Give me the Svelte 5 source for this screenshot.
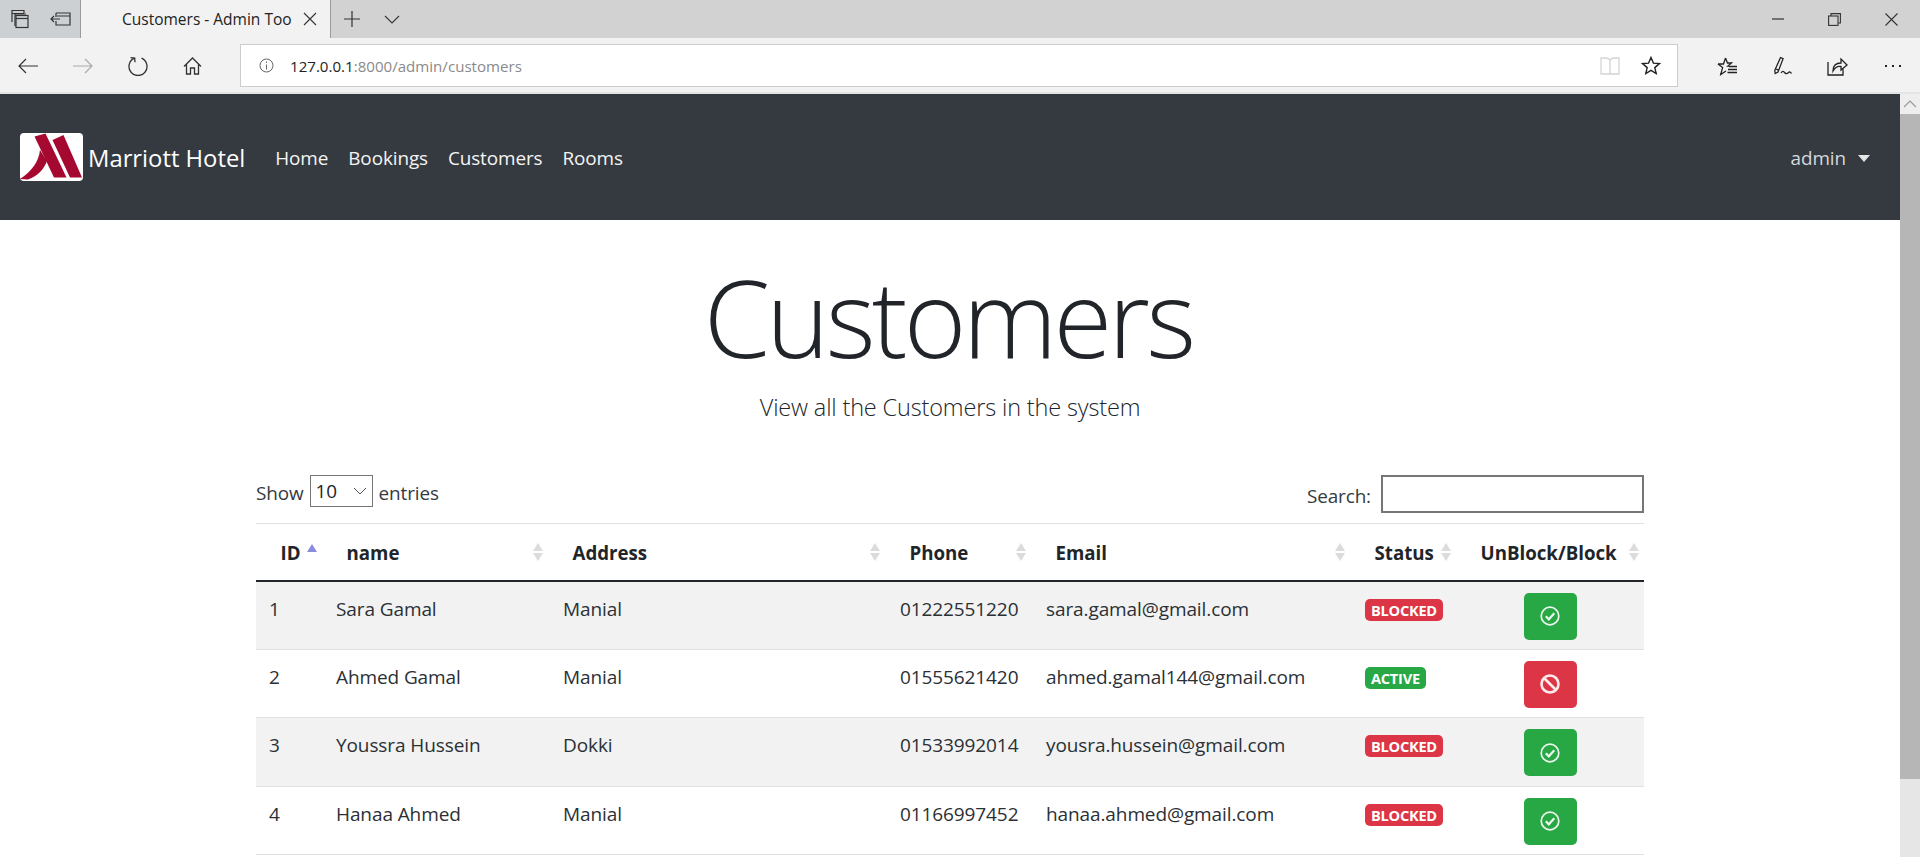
<script>
  const customers = [
    { id: 1, name: 'Sara Gamal', address: 'Manial', phone: '01222551220', email: 'sara.gamal@gmail.com', active: false },
    { id: 2, name: 'Ahmed Gamal', address: 'Manial', phone: '01555621420', email: 'ahmed.gamal144@gmail.com', active: true },
    { id: 3, name: 'Youssra Hussein', address: 'Dokki', phone: '01533992014', email: 'yousra.hussein@gmail.com', active: false },
    { id: 4, name: 'Hanaa Ahmed', address: 'Manial', phone: '01166997452', email: 'hanaa.ahmed@gmail.com', active: false }
  ];
  const headers = [
    { label: 'ID', sorted: true },
    { label: 'name' },
    { label: 'Address' },
    { label: 'Phone' },
    { label: 'Email' },
    { label: 'Status' },
    { label: 'UnBlock/Block' }
  ];
  const links = ['Home', 'Bookings', 'Customers', 'Rooms'];
</script>

<div class="window">
  <header class="tabbar">
    <div class="tab-tools">
      <span class="tbtn w40"><svg width="20" height="20" viewBox="0 0 20 20" fill="none" stroke="#333" stroke-width="1.2"><path d="M2 13V1.5h12V4M2 4.5h12"/><path d="M5 17V5h11v0"/><rect x="6" y="6.5" width="12" height="12"/><path d="M6 9.5h12"/></svg></span>
      <span class="tbtn w40"><svg width="21" height="14" viewBox="0 0 21 14" fill="none" stroke="#333" stroke-width="1.2"><path d="M6 1h14v12H6V9M6 5V1M7 4h13"/><path d="M10 7H1M4 4L1 7l3 3"/></svg></span>
    </div>
    <div class="tab">
      <span class="tab-title">Customers - Admin Too</span>
      <svg class="tab-x" width="14" height="14" viewBox="0 0 14 14" stroke="#333" stroke-width="1.1"><path d="M1 1l12 12M13 1L1 13"/></svg>
    </div>
    <span class="tbtn w41"><svg width="16" height="16" viewBox="0 0 16 16" stroke="#333" stroke-width="1.2"><path d="M8 0v16M0 8h16"/></svg></span>
    <span class="tbtn w40"><svg width="16" height="9" viewBox="0 0 16 9" fill="none" stroke="#333" stroke-width="1.1"><path d="M1 1l7 7 7-7"/></svg></span>
    <span class="spacer"></span>
    <span class="tbtn w57"><svg width="12" height="2" viewBox="0 0 12 2" stroke="#333" stroke-width="1.2"><path d="M0 1h12"/></svg></span>
    <span class="tbtn w57"><svg width="13" height="13" viewBox="0 0 13 13" fill="none" stroke="#333" stroke-width="1.1"><path d="M3 3V.6h9.4V10H10"/><rect x=".6" y="3" width="9.4" height="9.4"/></svg></span>
    <span class="tbtn w57"><svg width="13" height="13" viewBox="0 0 13 13" stroke="#333" stroke-width="1.1"><path d="M.5.5l12 12M12.5.5l-12 12"/></svg></span>
  </header>

  <div class="toolbar">
    <span class="tbtn w55"><svg width="20" height="16" viewBox="0 0 20 16" fill="none" stroke="#333" stroke-width="1.2"><path d="M20 8H1M8 1L1 8l7 7"/></svg></span>
    <span class="tbtn w55"><svg width="20" height="16" viewBox="0 0 20 16" fill="none" stroke="#aaa" stroke-width="1.2"><path d="M0 8h19M12 1l7 7-7 7"/></svg></span>
    <span class="tbtn w55"><svg width="20" height="20" viewBox="0 0 20 20" fill="none" stroke="#333" stroke-width="1.3"><path d="M6.5 2.2a9 9 0 1 0 7 0"/><path d="M2.5 1.6l4.2.5.3 4.2"/></svg></span>
    <span class="tbtn w55"><svg width="19" height="18" viewBox="0 0 19 18" fill="none" stroke="#333" stroke-width="1.3"><path d="M1 9.5L9.5 1 18 9.5M3.5 7.5V17h4v-6h4v6h4V7.5"/></svg></span>
    <div class="address">
      <svg class="info" width="15" height="15" viewBox="0 0 15 15" fill="none" stroke="#666"><circle cx="7.5" cy="7.5" r="6.5"/><path d="M7.5 6.5v5M7.5 3.5v1.4"/></svg>
      <span class="url"><span class="host">127.0.0.1</span>:8000/admin/customers</span>
      <span class="spacer"></span>
      <svg width="20" height="19" viewBox="0 0 20 19" fill="none" stroke="#d4d4d4" stroke-width="1.3"><path d="M1 2h4c2 0 4 .5 5 2 1-1.500 3-2 5-2h4v16H1z"/><path d="M10 4v14"/></svg>
      <svg class="star" width="20" height="19" viewBox="0 0 20 19" fill="none" stroke="#222" stroke-width="1.4"><path d="M10 1.500l2.400 5.600 6 .5-4.600 4 1.400 5.900L10 14.400l-5.200 3.100 1.400-5.900-4.600-4 6-.5z"/></svg>
    </div>
    <span class="tbtn w55 first"><svg width="21" height="19" viewBox="0 0 21 19" fill="none" stroke="#222" stroke-width="1.3"><path d="M8.500 1l2 5h4l-3.600 3 1.400 0M1 7h5.500L8.500 1M1 7l4.600 3.600L3.700 17.500 9 14"/><path d="M12 9.500h8M11 12.500h9M10.500 15.500h9.500"/></svg></span>
    <span class="tbtn w55"><svg width="19" height="20" viewBox="0 0 19 20" fill="none" stroke="#222" stroke-width="1.3"><path d="M7.500 1.500l2.600 1.200L5 16l-2.800 1.500-.4-3.200zM3 13l3 1.400"/><path d="M8 17c2-3 3-1 4 0s2 1 3.500-.5 2.500.5 3 1"/></svg></span>
    <span class="tbtn w55"><svg width="21" height="19" viewBox="0 0 21 19" fill="none" stroke="#222" stroke-width="1.3"><path d="M1 5v13h15v-6"/><path d="M6 14c0-5 3-8 8-8V2l6 6-6 5V9.500c-3-.5-6 1-8 4.500z"/></svg></span>
    <span class="tbtn w55"><span class="dots"><i></i><i></i><i></i></span></span>
  </div>

  <div class="viewport">
    <div class="page">
      <nav class="navbar">
        <a class="brand" href="#top">
          <svg class="logo" width="63" height="48" viewBox="0 0 63 48" aria-label="Marriott logo">
            <rect width="63" height="48" rx="4" fill="#fff"/>
            <path fill="#a6092f" d="M14.500 3.500L25.500.5l21 44H34zM32.500 7l11-5L62 44.500H50z"/>
            <path fill="#a6092f" d="M20 17c-1 11-8 21-20 29l8 .5C18 43 24 36 27 28z"/>
          </svg>
          <span class="brand-name">Marriott Hotel</span>
        </a>
        <ul class="links">
          {#each links as l}<li><a href="#top">{l}</a></li>{/each}
        </ul>
        <a class="user" href="#top">admin<span class="caret"></span></a>
      </nav>

      <main class="container">
        <section class="hero">
          <h1>Customers</h1>
          <p>View all the Customers in the system</p>
        </section>

        <div class="controls">
          <label class="show">Show
            <span class="select">10<svg width="14" height="8" viewBox="0 0 14 8" fill="none" stroke="#555"><path d="M1 1l6 6 6-6"/></svg></span>
            entries</label>
          <label class="search">Search:<span class="input"></span></label>
        </div>

        <table>
          <colgroup>
            <col class="c1" /><col class="c2" /><col class="c3" /><col class="c4" /><col class="c5" /><col class="c6" /><col class="c7" />
          </colgroup>
          <thead>
            <tr>
              {#each headers as h}
                <th>{h.label}<span class="sort" class:sorted={h.sorted}></span></th>
              {/each}
            </tr>
          </thead>
          <tbody>
            {#each customers as c, i}
              <tr class:odd={i % 2 === 0}>
                <td>{c.id}</td>
                <td>{c.name}</td>
                <td>{c.address}</td>
                <td>{c.phone}</td>
                <td>{c.email}</td>
                <td><span class="badge" class:green={c.active}>{c.active ? 'ACTIVE' : 'BLOCKED'}</span></td>
                <td class="action">
                  <span class="btn" class:green={!c.active}>
                    {#if c.active}
                      <svg width="20" height="20" viewBox="0 0 20 20" fill="none" stroke="#fbe9eb" stroke-width="2.6"><circle cx="10" cy="10" r="8.500"/><path d="M4 4l12 12"/></svg>
                    {:else}
                      <svg width="20" height="20" viewBox="0 0 20 20" fill="none" stroke="#eaf6ec" stroke-width="1.7"><circle cx="10" cy="10" r="8.800"/><path stroke-width="2.2" d="M5.800 10.300l3 3 5.500-6"/></svg>
                    {/if}
                  </span>
                </td>
              </tr>
            {/each}
          </tbody>
        </table>
      </main>
    </div>
    <aside class="scrollbar">
      <span class="sb-up"><svg width="14" height="8" viewBox="0 0 14 8" fill="none" stroke="#999" stroke-width="1.2"><path d="M1 7l6-6 6 6"/></svg></span>
      <span class="sb-thumb"></span>
      <span class="sb-track"></span>
    </aside>
  </div>
</div>

<style>
  :global(body) { margin: 0; background: #fff; }
  .window {
    width: 1920px; height: 857px; overflow: hidden;
    display: flex; flex-direction: column;
    font-family: "Open Sans", "Noto Sans", sans-serif;
    color: #212529;
  }
  .spacer { flex: 1; }
  .tbtn { display: flex; align-items: center; justify-content: center; flex: none; }
  .w40 { width: 40px; } .w41 { width: 41px; } .w55 { width: 55px; } .w57 { width: 57px; }

  .tabbar { height: 38px; flex: none; display: flex; background: #d2d2d2; }
  .tab-tools { display: flex; width: 80px; background: #cdd0d2; }
  .tab {
    width: 251px; box-sizing: border-box; background: #f2f2f2;
    border-left: 1px solid #9a9a9a; border-right: 1px solid #9a9a9a;
    display: flex; align-items: center; padding-left: 41px;
  }
  .tab-title { font-size: 15.500px; color: #222; width: 172px; white-space: nowrap; }
  .tab-x { margin-left: 9px; flex: none; }

  .toolbar {
    height: 56px; flex: none; box-sizing: border-box; display: flex; align-items: flex-start;
    background: #f2f2f2; border-bottom: 2px solid #e4e4e6;
  }
  .toolbar > .tbtn { height: 56px; }
  .address {
    margin: 6px 0 0 20px; width: 1438px; height: 43px; box-sizing: border-box;
    background: #fff; border: 1px solid #ccc; display: flex; align-items: center;
    padding: 0 16px 0 18px;
  }
  .url { margin-left: 16px; font-size: 15.100px; color: #8a8a8a; }
  .host { color: #222; }
  .star { margin-left: 21px; }
  .first { margin-left: 22px; }
  .dots { display: flex; gap: 5px; }
  .dots i { width: 2px; height: 2px; background: #222; display: block; }

  .viewport { flex: 1; min-height: 0; display: flex; }
  .page { flex: 1; min-width: 0; }
  .scrollbar { width: 20px; flex: none; display: flex; flex-direction: column; background: #e6e6e6; }
  .sb-up { height: 20px; background: #eeeeee; display: flex; align-items: center; justify-content: center; }
  .sb-thumb { height: 665px; background: #b6b6b6; }
  .sb-track { flex: 1; }

  .navbar {
    height: 126px; background: #343a40; display: flex; align-items: center;
    padding: 0 30px 0 20px; box-sizing: border-box;
  }
  .navbar a { text-decoration: none; }
  .brand { display: flex; align-items: center; color: #fff; font-size: 23.800px; font-weight: 400; }
  .brand-name { margin-top: 2px; }
  .logo { margin-right: 5px; }
  .links { list-style: none; display: flex; margin: 2px 0 0 20px; padding: 0; }
  .links a { display: block; padding: 0 10px; color: #f4f4f4; font-size: 18.900px; letter-spacing: -0.1px; }
  .user { margin: 2px 0 0 auto; display: flex; align-items: center; color: #d5d8dc; font-size: 18.900px; letter-spacing: -0.1px; }
  .caret { margin-left: 12px; border-top: 7px solid #e4e6e8; border-left: 6px solid transparent; border-right: 6px solid transparent; }

  .container { width: 1388px; margin: 0 0 0 256px; }
  .hero { height: 255px; box-sizing: border-box; padding-top: 33px; text-align: center; }
  h1 { margin: 0; padding-right: 4px; font-size: 107px; line-height: 128px; font-weight: 300; letter-spacing: -3.800px; color: #212529; }
  .hero p { margin: 8px 0 0; font-size: 23.500px; line-height: 36px; font-weight: 300; letter-spacing: -0.15px; }

  .controls { height: 48px; display: flex; justify-content: space-between; font-size: 18.900px; letter-spacing: -0.1px; color: #343a40; }
  .show { display: flex; align-items: flex-start; line-height: 37px; }
  .select {
    width: 63px; height: 32px; margin: 0 6px; box-sizing: border-box; border: 1px solid #767676; line-height: 30px;
    display: flex; align-items: center; justify-content: space-between; padding: 0 5px 0 5px; color: #212529;
  }
  .search { display: flex; align-items: flex-start; line-height: 43px; }
  .input { width: 263px; height: 38px; margin-left: 10px; box-sizing: border-box; border: 2px solid #767676; display: block; background: #fff; }

  table { width: 1388px; table-layout: fixed; border-collapse: collapse; font-size: 19px; letter-spacing: -0.1px; }
  .c1 { width: 66px; } .c2 { width: 226px; } .c3 { width: 337px; } .c4 { width: 146px; }
  .c5 { width: 319px; } .c6 { width: 106px; } .c7 { width: 188px; }
  th {
    position: relative; height: 57px; padding: 2px 0 0 24.500px; text-align: left; box-sizing: border-box;
    border-top: 1px solid #dee2e6; border-bottom: 2px solid #212529; font-weight: 700; font-size: 18.700px; letter-spacing: 0; white-space: nowrap; overflow: visible;
  }
  .sort { position: absolute; right: 5px; top: 19px; width: 10px; height: 18px; }
  .sort::before, .sort::after {
    content: ''; position: absolute; left: 0; border-left: 5px solid transparent; border-right: 5px solid transparent;
  }
  .sort::before { top: 0; border-bottom: 8px solid #dcdcdc; }
  .sort::after { bottom: 0; border-top: 8px solid #dcdcdc; }
  .sort.sorted { top: 20px; }
  .sort.sorted::before { border-bottom-color: #8b8bdd; }
  .sort.sorted::after { display: none; }
  td { padding: 12px 15px 15px; height: 68.500px; box-sizing: border-box; vertical-align: top; line-height: 30px; border-bottom: 1px solid #dee2e6; white-space: nowrap; color: #2b3035; }
  td:first-child { padding-left: 13px; }
  td:nth-child(2) { padding-left: 14px; }
  .odd td { background: #f2f2f2; }
  .badge {
    display: block; width: fit-content; height: 22px; margin-top: 5px; padding: 0 6px; border-radius: 5px;
    background: #dc3545; color: #fff; font-size: 14.600px; font-weight: 700; line-height: 22px; letter-spacing: -0.25px;
  }
  .badge.green { background: #28a745; }
  td.action { padding: 11px 0 0; }
  .btn {
    display: flex; align-items: center; justify-content: center; width: 53px; height: 47px; margin: 0 auto;
    background: #dc3545; border-radius: 5px;
  }
  .btn.green { background: #28a745; }
</style>
